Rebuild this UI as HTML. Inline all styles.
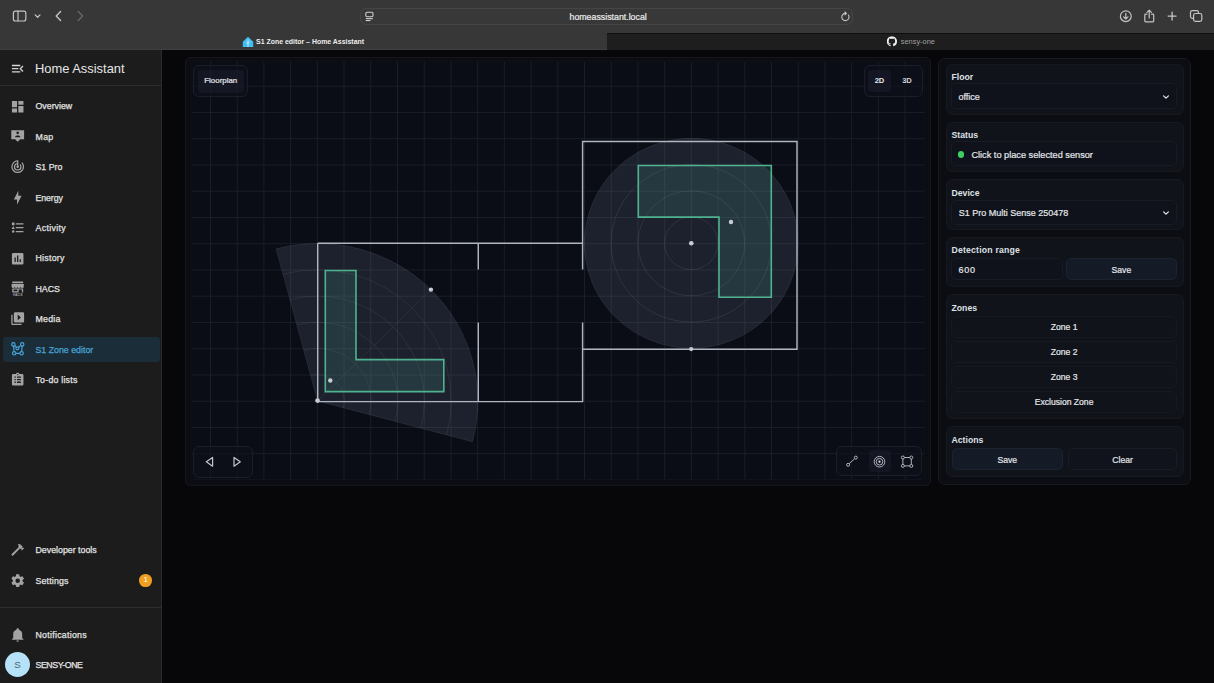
<!DOCTYPE html>
<html><head><meta charset="utf-8">
<style>
*{box-sizing:border-box;margin:0;padding:0}
html,body{width:1214px;height:683px;overflow:hidden;background:#070709;font-family:"Liberation Sans",sans-serif;}
.a{position:absolute}
.it{position:absolute;left:35.5px;font-size:8.8px;color:#e3e3e3;-webkit-text-stroke:0.25px #e3e3e3;white-space:nowrap;line-height:12px}
.ic{position:absolute;left:10.1px;width:15.4px;height:15.4px;fill:#a3a3a3}
.card{position:absolute;border-radius:7px}
.lbl{position:absolute;left:951.5px;font-size:8.7px;font-weight:bold;color:#dfe1e6;line-height:10px;white-space:nowrap}
.box{position:absolute;border-radius:5px;background:#10131b;border:1px solid #1a1e28}
.btxt{position:absolute;font-size:8.6px;color:#e4e6ea;-webkit-text-stroke:0.2px #e4e6ea;line-height:10px;white-space:nowrap;text-align:center}
</style></head><body>
<div class="a" style="left:0;top:0;width:1214px;height:50px;background:#373737"></div>
<div class="a" style="left:0;top:49px;width:607px;height:1px;background:#3f3f3f"></div>
<div class="a" style="left:607px;top:33px;width:607px;height:17px;background:#1e1e1e;border-top:1px solid #101010"></div>
<div class="a" style="left:360px;top:8px;width:493px;height:17px;border:1px solid #454545;border-radius:6px;background:#383838"></div>
<div class="a" style="left:569.5px;top:12.2px;font-size:8.8px;line-height:10px;color:#ececec;-webkit-text-stroke:0.2px #ececec;white-space:nowrap">homeassistant.local</div>
<svg class="a" style="left:0;top:0" width="1214" height="50" viewBox="0 0 1214 50">
 <g fill="none" stroke="#c4c4c4" stroke-width="1.2" stroke-linecap="round" stroke-linejoin="round">
  <rect x="13.4" y="11.2" width="12.4" height="9.8" rx="2"/>
  <line x1="18" y1="11.2" x2="18" y2="21"/>
  <path d="M35.2 14.9 L37.6 17.2 L40 14.9" stroke-width="1.3"/>
  <path d="M60.6 11.4 L56.2 15.9 L60.6 20.4" stroke-width="1.4"/>
  <path d="M78.2 11.4 L82.6 15.9 L78.2 20.4" stroke="#676767" stroke-width="1.4"/>
  <circle cx="1125.8" cy="16.2" r="5.4"/>
  <path d="M1125.8 13.3 V18.8 M1123.6 16.8 L1125.8 19 L1128 16.8"/>
  <path d="M1146.9 14.2 H1145.6 Q1144.8 14.2 1144.8 15 V21 Q1144.8 21.8 1145.6 21.8 H1152.9 Q1153.7 21.8 1153.7 21 V15 Q1153.7 14.2 1152.9 14.2 H1151.6"/>
  <path d="M1149.2 18 V10.2 M1147 12.3 L1149.2 10.1 L1151.4 12.3"/>
  <path d="M1172.1 12.1 V20.1 M1168.1 16.1 H1176.1" stroke-width="1.3"/>
  <rect x="1190.5" y="10.6" width="8" height="7.8" rx="1.8"/>
  <rect x="1193.6" y="13.5" width="8.2" height="7.8" rx="1.8" fill="#373737"/>
  <path d="M848.4 15 A3.6 3.6 0 1 1 845.6 13.4" stroke-width="1.1"/>
  <path d="M845.1 11.8 L846.9 13.4 L845.1 15 Z" fill="#cfcfcf" stroke-width="0.6"/>
 </g>
 <g fill="#cfcfcf">
  <rect x="365.8" y="12.2" width="7.2" height="4.6" rx="1.2" fill="none" stroke="#cfcfcf" stroke-width="1.1"/>
  <rect x="365.8" y="18.1" width="7" height="1.1"/>
  <rect x="365.8" y="20" width="4.6" height="1.1"/>
 </g>
 <path d="M248 36.8 L253.2 41.8 V46.9 H242.8 V41.8 Z" fill="#41bdf5"/>
 <path d="M248 39.5 V46.9 M246.2 42 L248 43.7 L249.8 41.5" stroke="#e8f6fd" stroke-width="0.8" fill="none"/>
 <svg x="886.8" y="36.3" width="10.2" height="10.2" viewBox="0 0 16 16"><path fill="#f2f2f2" d="M8 0C3.58 0 0 3.580 0 8c0 3.54 2.29 6.53 5.47 7.59.4.07.55-.17.55-.38 0-.19-.01-.82-.01-1.49-2.01.37-2.53-.49-2.69-.94-.09-.23-.48-.94-.82-1.13-.28-.15-.68-.52-.01-.53.63-.01 1.08.58 1.23.82.72 1.21 1.87.87 2.33.66.07-.52.28-.87.51-1.07-1.78-.2-3.64-.89-3.64-3.95 0-.87.31-1.59.82-2.15-.08-.2-.36-1.020.08-2.12 0 0 .67-.21 2.2.82.64-.18 1.32-.27 2-.27.68 0 1.36.09 2 .27 1.53-1.04 2.2-.82 2.2-.82.44 1.1.16 1.92.08 2.12.51.56.82 1.27.82 2.15 0 3.07-1.87 3.75-3.65 3.95.29.25.54.73.54 1.48 0 1.07-.01 1.93-.01 2.2 0 .21.15.46.55.38A8.013 8.013 0 0016 8c0-4.42-3.58-8-8-8z"/></svg>
</svg>
<div class="a" style="left:256px;top:38px;font-size:6.95px;font-weight:bold;color:#ececec;line-height:8px;white-space:nowrap">S1 Zone editor – Home Assistant</div>
<div class="a" style="left:900.8px;top:38px;font-size:7.4px;color:#a0a0a0;line-height:8px;white-space:nowrap">sensy-one</div>
<div class="a" style="left:0;top:50px;width:162px;height:633px;background:#1c1c1c;border-right:1px solid #2b2b2b"></div>
<div class="a" style="left:162px;top:50px;width:1052px;height:633px;background:#070709"></div>
<div class="a" style="left:0;top:85px;width:161px;height:1px;background:#2f2f2f"></div>
<svg class="ic" style="top:60.5px;left:10px" viewBox="0 0 24 24"><path fill="#d6d6d6" d="M21,15.61L19.59,17L14.58,12L19.59,7L21,8.39L17.44,12L21,15.61M3,6H16V8H3V6M3,13V11H13V13H3M3,18V16H16V18H3Z"/></svg>
<div class="a" style="left:35px;top:60.7px;font-size:12.9px;color:#e6e6e6;line-height:16px;white-space:nowrap">Home Assistant</div>
<div class="a" style="left:2.8px;top:336.5px;width:157px;height:25.2px;border-radius:3px;background:#1b2d38"></div>
<svg class="ic" style="top:98.7px" viewBox="0 0 24 24"><path fill-rule="evenodd" d="M13,3V9H21V3M13,21H21V11H13M3,21H11V15H3M3,13H11V3H3V13Z"/></svg>
<div class="it" style="top:100.3px;letter-spacing:0.00px">Overview</div>
<svg class="ic" style="top:128.5px" viewBox="0 0 24 24"><path fill-rule="evenodd" d="M2,2H22V16H16L12,20L8,16H2V2M12,4A2,2 0 0,0 10,6A2,2 0 0,0 12,8A2,2 0 0,0 14,6A2,2 0 0,0 12,4M8,13H16V12C16,10.67 13.33,10 12,10C10.67,10 8,10.67 8,12V13Z"/></svg>
<div class="it" style="top:130.7px;letter-spacing:0.30px">Map</div>
<svg class="ic" style="top:159.3px" viewBox="0 0 24 24"><path fill-rule="evenodd" d="M19.07,4.93L17.66,6.34C19.1,7.79 20,9.79 20,12A8,8 0 0,1 12,20A8,8 0 0,1 4,12C4,7.92 7.05,4.56 11,4.07V6.09C8.16,6.57 6,9.03 6,12A6,6 0 0,0 12,18A6,6 0 0,0 18,12C18,10.34 17.330,8.84 16.24,7.76L14.83,9.17C15.55,9.9 16,10.9 16,12A4,4 0 0,1 12,16A4,4 0 0,1 8,12C8,10.14 9.28,8.59 11,8.14V10.28C10.4,10.63 10,11.26 10,12A2,2 0 0,0 12,14A2,2 0 0,0 14,12C14,11.26 13.6,10.62 13,10.28V2H12A10,10 0 0,0 2,12A10,10 0 0,0 12,22A10,10 0 0,0 22,12C22,9.24 20.88,6.74 19.07,4.93Z"/></svg>
<div class="it" style="top:161.1px;letter-spacing:0.00px">S1 Pro</div>
<svg class="ic" style="top:189.7px" viewBox="0 0 24 24"><path fill-rule="evenodd" d="M11 15H6L13 1V9H18L11 23V15Z"/></svg>
<div class="it" style="top:191.5px;letter-spacing:-0.10px">Energy</div>
<svg class="ic" style="top:220.1px" viewBox="0 0 24 24"><path fill-rule="evenodd" d="M5,9.5L7.5,14H2.5L5,9.5M3,4H7V8H3V4M5,20A2,2 0 0,0 7,18A2,2 0 0,0 5,16A2,2 0 0,0 3,18A2,2 0 0,0 5,20M9,5V7H21V5H9M9,19H21V17H9V19M9,13H21V11H9V13Z"/></svg>
<div class="it" style="top:221.9px;letter-spacing:0.34px">Activity</div>
<svg class="ic" style="top:250.5px" viewBox="0 0 24 24"><path fill-rule="evenodd" d="M19 3H5C3.9 3 3 3.9 3 5V19C3 20.1 3.9 21 5 21H19C20.1 21 21 20.1 21 19V5C21 3.9 20.1 3 19 3M9 17H7V10H9V17M13 17H11V7H13V17M17 17H15V13H17V17Z"/></svg>
<div class="it" style="top:252.3px;letter-spacing:0.26px">History</div>
<svg class="ic" style="top:280.9px" viewBox="0 0 24 24"><path fill-rule="evenodd" d="M3.5,0.8H20.5V3.6H3.5Z M2.5,4.6H21.5V8.6A2.375,2.375 0 0,1 16.75,8.6A2.375,2.375 0 0,1 12,8.6A2.375,2.375 0 0,1 7.25,8.6A2.375,2.375 0 0,1 2.5,8.6Z M3.5,11.6H20.5V18H3.5Z M5.5,13.2V16H11.5V13.2Z M13.5,13.2V18H18.5V13.2Z"/><text x="12" y="23.4" font-size="5.2" text-anchor="middle" font-family="Liberation Sans" font-weight="bold" fill="#a3a3a3">HACS</text></svg>
<div class="it" style="top:282.7px;letter-spacing:0.00px">HACS</div>
<svg class="ic" style="top:311.3px" viewBox="0 0 24 24"><path fill-rule="evenodd" d="M4,6H2V20A2,2 0 0,0 4,22H18V20H4V6M22,4V16A2,2 0 0,1 20,18H8A2,2 0 0,1 6,16V4A2,2 0 0,1 8,2H20A2,2 0 0,1 22,4M12,14.5L17,10L12,5.5V14.5Z"/></svg>
<div class="it" style="top:313.1px;letter-spacing:0.25px">Media</div>
<svg class="a" style="left:0;top:0" width="40" height="683" viewBox="0 0 40 683"><g stroke="#48a6dc" stroke-width="1.15" fill="none"><path d="M13.4 344.4 L17.4 348.3 L22.2 344.4 M13.4 344.4 L14.2 353.3 L21.6 353.3 L22.2 344.4"/></g><g stroke="#48a6dc" stroke-width="1.15" fill="#1b2d38"><circle cx="13.4" cy="344.4" r="1.7"/><circle cx="22.2" cy="344.4" r="1.7"/><circle cx="14.2" cy="353.3" r="1.7"/><circle cx="21.6" cy="353.3" r="1.7"/><circle cx="17.4" cy="348.3" r="1.5"/></g></svg>
<div class="it" style="top:343.5px;color:#48a3d6;-webkit-text-stroke-color:#48a3d6">S1 Zone editor</div>
<svg class="ic" style="top:372.1px" viewBox="0 0 24 24"><path fill-rule="evenodd" d="M19,3A2,2 0 0,1 21,5V19A2,2 0 0,1 19,21H5A2,2 0 0,1 3,19V5A2,2 0 0,1 5,3H9.18C9.6,1.84 10.7,1 12,1C13.3,1 14.4,1.84 14.82,3H19M12,3A1,1 0 0,0 11,4A1,1 0 0,0 12,5A1,1 0 0,0 13,4A1,1 0 0,0 12,3M7,7V9H9V7H7M11,7V9H17V7H11M7,11V13H9V11H7M11,11V13H17V11H11M7,15V17H9V15H7M11,15V17H17V15H11Z"/></svg>
<div class="it" style="top:373.9px;letter-spacing:0.22px">To-do lists</div>
<svg class="ic" style="top:542.3px" viewBox="0 0 24 24"><path fill-rule="evenodd" d="M2 19.63L13.43 8.2L12.72 7.5L14.14 6.07L12 3.89C13.2 2.7 15.09 2.7 16.27 3.89L19.87 7.5L18.45 8.91H21.29L22 9.62L18.45 13.21L17.74 12.5V9.62L16.27 11.04L15.56 10.33L4.13 21.76L2 19.63Z"/></svg>
<div class="it" style="top:544.1px;letter-spacing:0.00px">Developer tools</div>
<svg class="ic" style="top:572.7px" viewBox="0 0 24 24"><path fill-rule="evenodd" d="M12,15.5A3.5,3.5 0 0,1 8.5,12A3.5,3.5 0 0,1 12,8.5A3.5,3.5 0 0,1 15.5,12A3.5,3.5 0 0,1 12,15.5M19.43,12.97C19.47,12.65 19.5,12.33 19.5,12C19.5,11.67 19.47,11.34 19.43,11L21.54,9.37C21.73,9.22 21.78,8.95 21.66,8.73L19.66,5.27C19.54,5.05 19.27,4.96 19.05,5.05L16.56,6.05C16.04,5.66 15.5,5.32 14.87,5.07L14.5,2.42C14.46,2.18 14.25,2 14,2H10C9.750,2 9.54,2.18 9.5,2.42L9.13,5.07C8.5,5.32 7.96,5.66 7.44,6.05L4.95,5.05C4.73,4.96 4.46,5.05 4.34,5.27L2.34,8.73C2.21,8.95 2.27,9.22 2.46,9.37L4.57,11C4.53,11.34 4.5,11.67 4.5,12C4.5,12.33 4.53,12.65 4.57,12.97L2.46,14.63C2.27,14.78 2.21,15.05 2.34,15.27L4.34,18.73C4.46,18.95 4.73,19.03 4.95,18.950L7.44,17.94C7.96,18.34 8.5,18.68 9.13,18.93L9.5,21.58C9.54,21.82 9.75,22 10,22H14C14.25,22 14.46,21.82 14.5,21.58L14.87,18.93C15.5,18.67 16.04,18.34 16.56,17.94L19.05,18.95C19.27,19.03 19.54,18.95 19.66,18.73L21.66,15.27C21.78,15.05 21.73,14.78 21.54,14.63L19.43,12.97Z"/></svg>
<div class="it" style="top:574.5px;letter-spacing:0.17px">Settings</div>
<svg class="ic" style="top:626.7px" viewBox="0 0 24 24"><path fill-rule="evenodd" d="M21,19V20H3V19L5,17V11C5,7.9 7.03,5.17 10,4.29C10,4.19 10,4.1 10,4A2,2 0 0,1 12,2A2,2 0 0,1 14,4C14,4.1 14,4.19 14,4.29C16.97,5.17 19,7.9 19,11V17L21,19M14,21A2,2 0 0,1 12,23A2,2 0 0,1 10,21"/></svg>
<div class="it" style="top:628.5px;letter-spacing:0.27px">Notifications</div>
<div class="a" style="left:0;top:607px;width:161px;height:1px;background:#2f2f2f"></div>
<div class="a" style="left:139.4px;top:574.1px;width:12.6px;height:12.6px;border-radius:50%;background:#f0a020;color:#fff;font-size:8px;line-height:12.6px;text-align:center">1</div>
<div class="a" style="left:5px;top:652.4px;width:25px;height:25px;border-radius:50%;background:#b6e2f8;color:#4a6577;font-size:9.8px;line-height:26.4px;text-align:center">S</div>
<div class="it" style="top:658.9px;letter-spacing:-0.45px">SENSY-ONE</div>
<div class="card" style="left:185.2px;top:57.2px;width:746.0px;height:428.8px;background:#0c0d12;border:1px solid #16171d;border-radius:5px"></div>
<svg class="a" style="left:0;top:0" width="1214" height="683" viewBox="0 0 1214 683">
 <defs><clipPath id="cc"><rect x="191.7" y="61.5" width="732.8" height="418.0" rx="2"/></clipPath></defs>
 <rect x="191.7" y="61.5" width="732.8" height="418.0" rx="2" fill="#0a0d15" stroke="#0e1016" stroke-width="1"/>
 <g clip-path="url(#cc)">
 <path d="M210.50 61.5V479.5M237.22 61.5V479.5M263.93 61.5V479.5M290.64 61.5V479.5M317.36 61.5V479.5M344.07 61.5V479.5M370.79 61.5V479.5M397.50 61.5V479.5M424.22 61.5V479.5M450.94 61.5V479.5M477.65 61.5V479.5M504.37 61.5V479.5M531.08 61.5V479.5M557.80 61.5V479.5M584.51 61.5V479.5M611.23 61.5V479.5M637.94 61.5V479.5M664.65 61.5V479.5M691.37 61.5V479.5M718.09 61.5V479.5M744.80 61.5V479.5M771.51 61.5V479.5M798.23 61.5V479.5M824.95 61.5V479.5M851.66 61.5V479.5M878.38 61.5V479.5M905.09 61.5V479.5M191.7 86.20H924.5M191.7 112.45H924.5M191.7 138.70H924.5M191.7 164.95H924.5M191.7 191.20H924.5M191.7 217.45H924.5M191.7 243.70H924.5M191.7 269.95H924.5M191.7 296.20H924.5M191.7 322.45H924.5M191.7 348.70H924.5M191.7 374.95H924.5M191.7 401.20H924.5M191.7 427.45H924.5M191.7 453.70H924.5M191.7 479.95H924.5" stroke="#1a1e27" stroke-width="1" fill="none"/>
 <path d="M317.60 401.00 L276.11 248.87 A160.29 157.50 0 0 1 472.43 441.76 Z" fill="#a8b4e0" fill-opacity="0.12" stroke="#ffffff" stroke-opacity="0.1" stroke-width="0.8"/>
 <path d="M310.69 375.64 A26.71 26.25 0 0 1 343.40 407.79M303.77 350.29 A53.43 52.50 0 0 1 369.21 414.59M296.86 324.93 A80.14 78.75 0 0 1 395.01 421.38M289.94 299.58 A106.86 105.00 0 0 1 420.82 428.18M283.03 274.22 A133.57 131.25 0 0 1 446.62 434.97" fill="none" stroke="#ffffff" stroke-opacity="0.09" stroke-width="0.8"/>
 <path d="M317.60 401.00 L430.94 289.63" stroke="#ffffff" stroke-opacity="0.08" stroke-width="0.8"/>
 <ellipse cx="691.3" cy="243.3" rx="106.86" ry="105.00" fill="#a8b4e0" fill-opacity="0.12" stroke="#ffffff" stroke-opacity="0.1" stroke-width="0.8"/>
 <g fill="none" stroke="#ffffff" stroke-opacity="0.11" stroke-width="0.8"><ellipse cx="691.3" cy="243.3" rx="26.71" ry="26.25"/><ellipse cx="691.3" cy="243.3" rx="53.43" ry="52.50"/><ellipse cx="691.3" cy="243.3" rx="80.14" ry="78.75"/></g>
 <path d="M325.3 270.5 H356 V359.6 H443.8 V391.6 H325.3 Z" fill="#4a9488" fill-opacity="0.2" stroke="#4fb38f" stroke-width="1.6"/>
 <path d="M638.3 165.5 H771.3 V297.2 H719 V217.1 H638.3 Z" fill="#4a9488" fill-opacity="0.2" stroke="#4fb38f" stroke-width="1.6"/>
 <g fill="none" stroke="#b0b6c0" stroke-width="1.45">
  <path d="M317.7 243.2 H582.6 M317.7 243.2 V401.6 H582.6 V322.4 M582.6 269.6 V141.4 H797 V349.3 H582.6 M478.3 243.2 V269.6 M478.3 322.4 V401.6"/>
 </g>
 <g fill="#c9ccd3">
  <circle cx="317.5" cy="400.6" r="2.3"/>
  <circle cx="430.9" cy="289.6" r="2.2"/>
  <circle cx="330.3" cy="380.5" r="2.2"/>
  <circle cx="691.3" cy="243.3" r="2.3"/>
  <circle cx="691.2" cy="349.1" r="2.1"/>
  <circle cx="731" cy="222" r="2.2"/>
 </g>
 </g>
</svg>
<div class="box" style="left:193.3px;top:65.2px;width:55.0px;height:31.6px;background:rgba(14,17,27,0.6);border-color:#1a1e29;border-radius:6px"></div>
<div class="box" style="left:197.5px;top:69.5px;width:46.5px;height:23.0px;background:rgba(28,32,46,0.5);border-color:transparent;border-radius:4px"></div>
<div class="btxt" style="left:197.5px;width:46.5px;top:76px;font-size:7.9px">Floorplan</div>
<div class="box" style="left:864.0px;top:65.3px;width:58.5px;height:31.4px;background:rgba(14,17,27,0.6);border-color:#1a1e29;border-radius:6px"></div>
<div class="box" style="left:868.0px;top:69.8px;width:23.0px;height:22.6px;background:rgba(28,32,46,0.5);border-color:transparent;border-radius:4px"></div>
<div class="btxt" style="left:868px;width:23px;top:76px;font-size:7.6px;font-weight:bold;-webkit-text-stroke:0">2D</div>
<div class="btxt" style="left:895.5px;width:23px;top:76px;font-size:7.6px;font-weight:bold;color:#d0d3da;-webkit-text-stroke:0">3D</div>
<div class="box" style="left:193.3px;top:446.4px;width:60.0px;height:31.8px;background:rgba(14,17,27,0.6);border-color:#1a1e29;border-radius:6px"></div>
<svg class="a" style="left:0;top:0" width="1214" height="683" viewBox="0 0 1214 683"><g fill="none" stroke="#c4c7cf" stroke-width="1.2" stroke-linejoin="round"><path d="M212.6 457.4 L206.3 461.8 L212.6 466.2 Z"/><path d="M234 457.4 L240.3 461.8 L234 466.2 Z"/></g></svg>
<div class="box" style="left:836.3px;top:446.3px;width:86.0px;height:29.6px;background:rgba(14,17,27,0.6);border-color:#1a1e29;border-radius:6px"></div>
<div class="box" style="left:868.5px;top:450.4px;width:22.6px;height:21.7px;background:rgba(28,32,46,0.5);border-color:transparent;border-radius:4px"></div>
<svg class="a" style="left:0;top:0" width="1214" height="683" viewBox="0 0 1214 683"><g fill="none" stroke="#bfc2ca" stroke-width="0.9"><line x1="849.2" y1="463.7" x2="854.7" y2="458.7"/><circle cx="848.1" cy="464.8" r="1.5"/><circle cx="855.8" cy="457.6" r="1.5"/>
<circle cx="879.5" cy="461.7" r="5.3"/><circle cx="879.5" cy="461.7" r="3.3"/>
<path d="M904.4 457.5 H909.8 M904.4 465.9 H909.8 M902.9 459 V464.4 M911.3 459 V464.4"/><circle cx="902.9" cy="457.5" r="1.5"/><circle cx="911.3" cy="457.5" r="1.5"/><circle cx="902.9" cy="465.9" r="1.5"/><circle cx="911.3" cy="465.9" r="1.5"/></g><circle cx="879.5" cy="461.7" r="1.1" fill="#e0e2e8"/></svg>
<div class="card" style="left:937.5px;top:57.5px;width:253.5px;height:427px;background:#0b0d13;border:1px solid #171a22"></div>
<div class="card" style="left:945.5px;top:64.3px;width:238.6px;height:50.3px;background:#10131a;border:1px solid #161920;border-radius:6px"></div>
<div class="card" style="left:945.5px;top:121.6px;width:238.6px;height:50.3px;background:#10131a;border:1px solid #161920;border-radius:6px"></div>
<div class="card" style="left:945.5px;top:179.2px;width:238.6px;height:50.7px;background:#10131a;border:1px solid #161920;border-radius:6px"></div>
<div class="card" style="left:945.5px;top:236.6px;width:238.6px;height:50.8px;background:#10131a;border:1px solid #161920;border-radius:6px"></div>
<div class="card" style="left:945.5px;top:294.0px;width:238.6px;height:124.6px;background:#10131a;border:1px solid #161920;border-radius:6px"></div>
<div class="card" style="left:945.5px;top:426.0px;width:238.6px;height:51.2px;background:#10131a;border:1px solid #161920;border-radius:6px"></div>
<div class="lbl" style="top:72.2px;letter-spacing:0.00px">Floor</div>
<div class="lbl" style="top:130.2px;letter-spacing:0.00px">Status</div>
<div class="lbl" style="top:187.6px;letter-spacing:0.00px">Device</div>
<div class="lbl" style="top:245.1px;letter-spacing:0.19px">Detection range</div>
<div class="lbl" style="top:302.7px;letter-spacing:0.00px">Zones</div>
<div class="lbl" style="top:434.8px;letter-spacing:0.00px">Actions</div>
<div class="box" style="left:951px;top:83.4px;width:225.5px;height:25.3px;background:#0f121a;border-color:#171b24"></div>
<div class="btxt" style="left:958.4px;top:92.2px;font-size:9px;text-align:left">office</div>
<svg class="a" style="left:1161.9px;top:93.8px" width="8" height="6" viewBox="0 0 8 6"><path d="M1.6 1.8 L4 4.2 L6.4 1.8" fill="none" stroke="#e6e8ec" stroke-width="1.2" stroke-linecap="round" stroke-linejoin="round"/></svg>
<div class="box" style="left:951px;top:141.2px;width:225.5px;height:25.3px;background:#0f121a;border-color:#171b24"></div>
<div class="a" style="left:957.8px;top:151.3px;width:6.6px;height:6.6px;border-radius:50%;background:#3ccf61"></div>
<div class="btxt" style="left:971.4px;top:150px;font-size:9.2px;text-align:left">Click to place selected sensor</div>
<div class="box" style="left:951px;top:199.5px;width:225.5px;height:25.3px;background:#0f121a;border-color:#171b24"></div>
<div class="btxt" style="left:958.8px;top:208px;font-size:9px;text-align:left">S1 Pro Multi Sense 250478</div>
<svg class="a" style="left:1161.9px;top:209.5px" width="8" height="6" viewBox="0 0 8 6"><path d="M1.6 1.8 L4 4.2 L6.4 1.8" fill="none" stroke="#e6e8ec" stroke-width="1.2" stroke-linecap="round" stroke-linejoin="round"/></svg>
<div class="box" style="left:951.3px;top:257.8px;width:112px;height:22.7px;background:#0f121a;border-color:#171b24"></div>
<div class="btxt" style="left:958.5px;top:265px;font-size:9px;letter-spacing:0.8px;text-align:left">600</div>
<div class="box" style="left:1066px;top:257.8px;width:110.8px;height:22.7px;background:#151a27;border-color:#1d2231"></div>
<div class="btxt" style="left:1066px;width:110.8px;top:264.5px">Save</div>
<div class="box" style="left:951.3px;top:316.2px;width:225.5px;height:21.7px;background:#10131a;border-color:#161922"></div>
<div class="btxt" style="left:951.3px;width:225.5px;top:322.2px">Zone 1</div>
<div class="box" style="left:951.3px;top:341.2px;width:225.5px;height:21.7px;background:#10131a;border-color:#161922"></div>
<div class="btxt" style="left:951.3px;width:225.5px;top:347.2px">Zone 2</div>
<div class="box" style="left:951.3px;top:366.2px;width:225.5px;height:21.7px;background:#10131a;border-color:#161922"></div>
<div class="btxt" style="left:951.3px;width:225.5px;top:372.2px">Zone 3</div>
<div class="box" style="left:951.3px;top:391.2px;width:225.5px;height:21.7px;background:#10131a;border-color:#161922"></div>
<div class="btxt" style="left:951.3px;width:225.5px;top:397.2px">Exclusion Zone</div>
<div class="box" style="left:951.6px;top:448.4px;width:111.4px;height:21.8px;background:#151a27;border-color:#1d2231"></div>
<div class="btxt" style="left:951.6px;width:111.4px;top:454.5px">Save</div>
<div class="box" style="left:1067.9px;top:448.4px;width:109.4px;height:21.8px;background:#10131b;border-color:#181c25"></div>
<div class="btxt" style="left:1067.9px;width:109.4px;top:454.5px">Clear</div>
</body></html>
